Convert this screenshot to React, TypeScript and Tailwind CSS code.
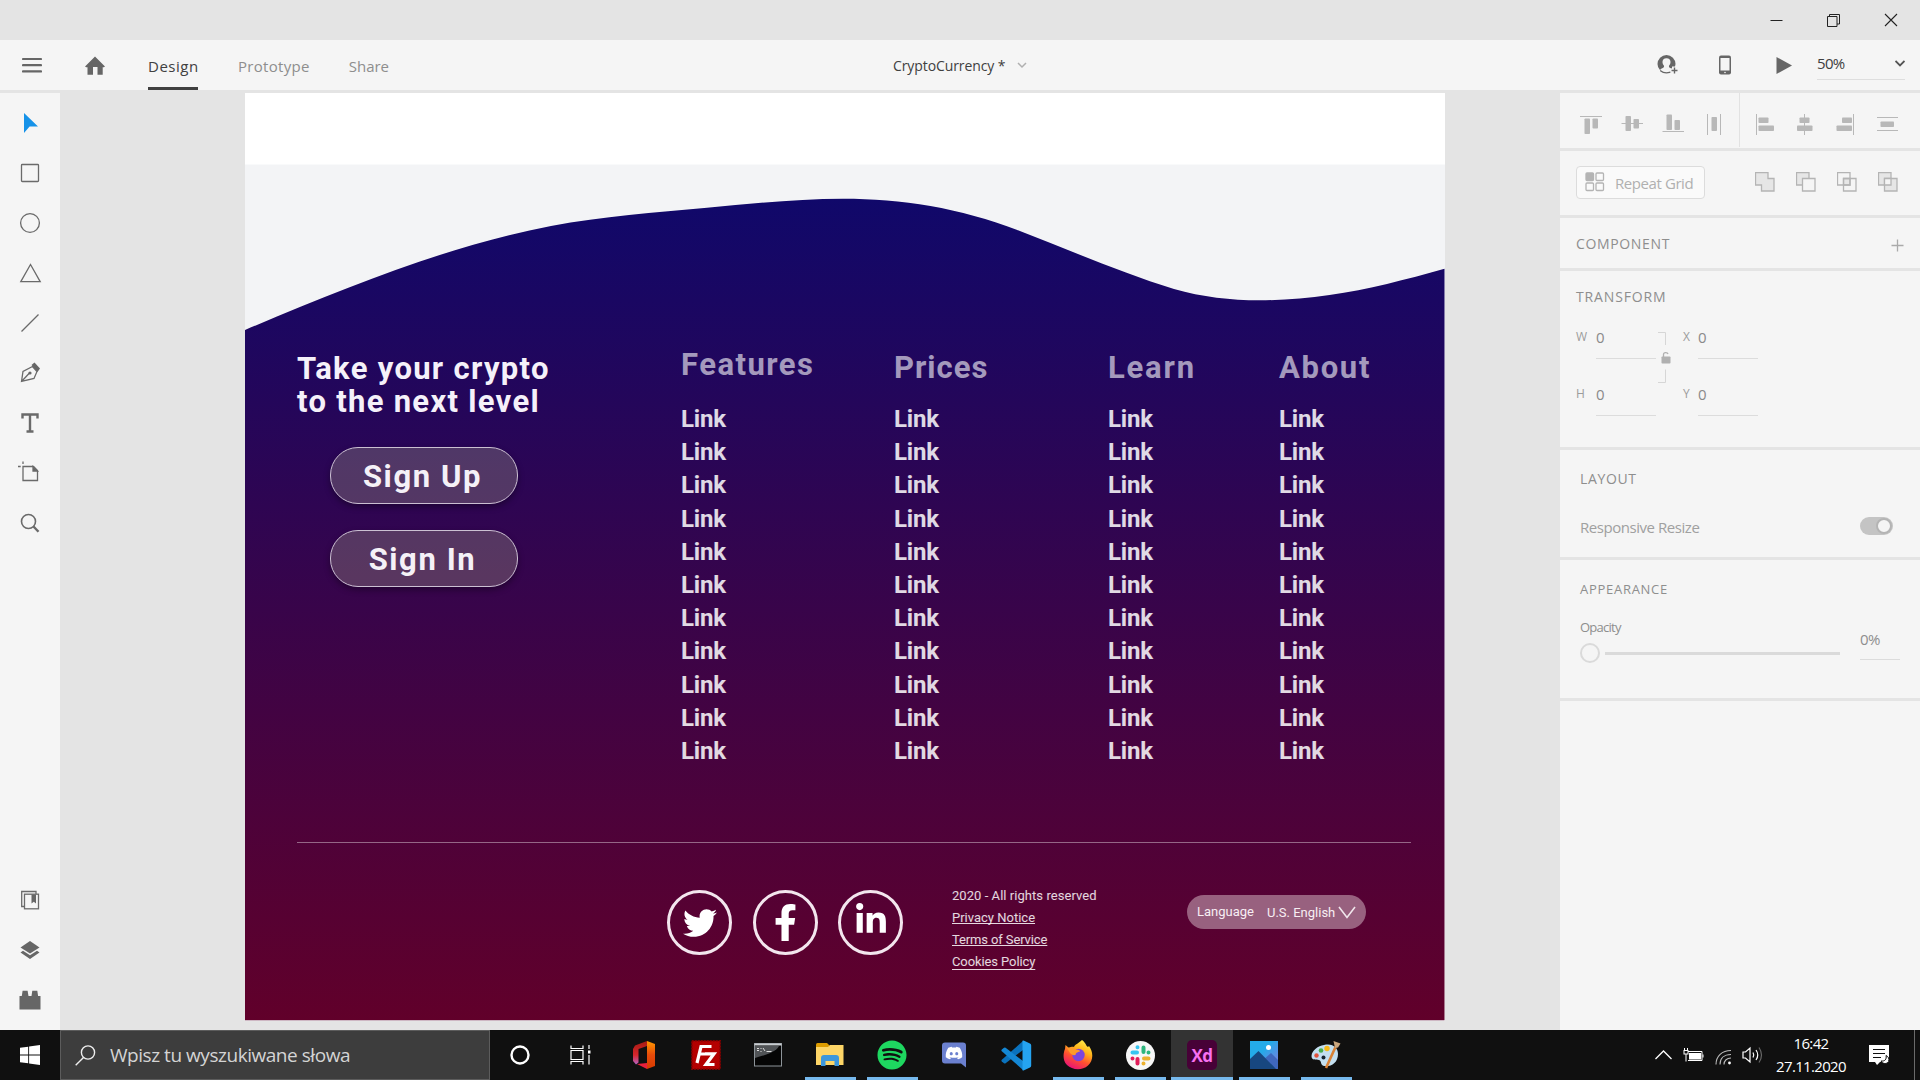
import React from "react";
import { FaDiscord, FaFacebookF, FaLinkedinIn, FaSpotify, FaTwitter } from "react-icons/fa";

type Kids = { children: React.ReactNode };

/* ---------- title bar and header ---------- */

function TitleBar() {
  return (
    <div className="flex h-10 shrink-0 items-center justify-end gap-[44px] bg-[#e4e4e4] pr-[22px]">
      <svg width="13" height="13" stroke="#222" fill="none"><path d="M.5 6.5h12" /></svg>
      <svg width="13" height="13" stroke="#222" fill="none" className="shrink-0">
        <path d="M.5 2.5h9.500v10h-9.500zM2.500 2V.5h10v9.500h-2.500" />
      </svg>
      <svg width="14" height="14" stroke="#222" fill="none"><path d="M1 1l12 12M13 1L1 13" strokeWidth="1.100" /></svg>
    </div>
  );
}

function Header() {
  return (
    <header className="flex h-[50px] shrink-0 items-center bg-[#f5f5f5] text-[15px]">
      <svg width="20" height="16" className="ml-[22px]" stroke="#666" strokeWidth="2.200" strokeLinecap="round">
        <path d="M1 2h18M1 8.200h18M1 14.400h18" />
      </svg>
      <svg width="20" height="19" className="ml-[43px]" fill="#666">
        <path d="M10 .5L20 10.500 18.800 11.300H17.700V18.700H12.500V11H8V18.700H2.500V11.300H1.200L0 10.500z" />
      </svg>
      <nav className="ml-[43px] flex h-full text-[#8e8e8e]">
        <span className="flex h-full w-[50px] items-center border-b-[3px] border-[#404040] pt-[5px] tracking-[0.500px] text-[#404040]">Design</span>
        <span className="ml-10 flex h-full items-center pt-0.5 tracking-[0.300px]">Prototype</span>
        <span className="ml-[39px] flex h-full items-center pt-0.5">Share</span>
      </nav>
      <div className="ml-[504px] flex items-center gap-3 text-[14px] tracking-[-0.100px] text-[#404040]">
        CryptoCurrency *
        <svg width="10" height="7" fill="none" stroke="#b0b0b0" strokeWidth="1.500"><path d="M1 1l4 4 4-4" /></svg>
      </div>
      <div className="ml-auto flex items-center">
        <svg width="21" height="20" className="mr-[41px]">
          <circle cx="9.500" cy="9" r="9" fill="#666" />
          <path d="M9.500 3.200c2.600 0 4 1.600 4 3.900 0 1.700-.8 2.800-1.500 3.700-.3 1.500.5 2 3.800 3.700L13 18H6l-2.800-3.500c3.300-1.700 4.100-2.200 3.800-3.700-.7-.9-1.500-2-1.500-3.700 0-2.300 1.400-3.900 4-3.900z" fill="#f5f5f5" />
          <path d="M3.400 15.700c3.500 3 8.600 3 12 0" fill="none" stroke="#666" strokeWidth="1.200" />
          <path d="M17 11.500v7.500M13.200 15.500h7.800" stroke="#f5f5f5" strokeWidth="4" />
          <path d="M17.500 12.500v6M14.500 15.500h6" stroke="#666" strokeWidth="1.400" />
        </svg>
        <svg width="12" height="20" className="mr-[45px]">
          <rect x="0" y=".5" width="12" height="19" rx="2" fill="#666" />
          <rect x="1.500" y="3" width="9" height="12.500" fill="#f5f5f5" />
          <circle cx="6" cy="17.500" r=".8" fill="#f5f5f5" />
        </svg>
        <svg width="16" height="17" className="mr-[25px]" fill="#666"><path d="M.5 0L16 8.500.5 17z" /></svg>
        <div className="mr-[15px] mb-px flex h-[30px] w-[88px] items-center justify-between border-b border-[#dedede] pb-0.5 tracking-[-0.700px] text-[#404040]">
          50%
          <svg width="10" height="7" fill="none" stroke="#555" strokeWidth="1.800"><path d="M.5 1l4.500 4.500L9.500 1" /></svg>
        </div>
      </div>
    </header>
  );
}

/* ---------- tool bar ---------- */

function Tool({ children }: Kids) {
  return (
    <div className="flex h-[50px] items-center justify-center">
      <svg width="24" height="24" fill="none" stroke="#6a6a6a" strokeWidth="1.300">{children}</svg>
    </div>
  );
}

function ToolBar() {
  return (
    <aside className="flex w-[60px] shrink-0 flex-col bg-[#f5f5f5] py-[5px]">
      <Tool><path d="M6 2v20l5.600-6.500H20z" fill="#1692e8" stroke="none" /></Tool>
      <Tool><rect x="3.500" y="3.500" width="17" height="17" rx=".8" /></Tool>
      <Tool><circle cx="12" cy="12" r="9.400" /></Tool>
      <Tool><path d="M12.500 3.500l9.700 17.200H2.800z" /></Tool>
      <Tool><path d="M3.500 20.500l17-17" /></Tool>
      <Tool>
        <g transform="translate(0 -1)">
          <path d="M3.500 21.500L5 11.500l9.500-5 4.500 5-3 7-12.500 3zM3.500 21.500l8-8.500" />
          <circle cx="12" cy="13" r="1.600" fill="#666" stroke="none" />
          <path d="M13.500 5l3-2.500 5.500 6-2.500 3.500z" fill="#666" stroke="none" />
        </g>
      </Tool>
      <Tool><path d="M4.500 7.500v-4h15v4M12 3.500v17M8.500 20.500h7" strokeWidth="2.400" /></Tool>
      <Tool>
        <g transform="translate(0 -1)">
          <path d="M5 6.500h10.500L19.500 10.500V20.500H5zM5 4V1.500M2.700 6.500H0" />
          <path d="M15 6.500v4.500h4.500z" fill="#666" />
        </g>
      </Tool>
      <Tool>
        <circle cx="10.500" cy="10.500" r="7" strokeWidth="1.600" />
        <path d="M15.500 15.500l5 5.300" strokeWidth="2.400" />
      </Tool>
      <div className="mt-auto">
        <Tool>
          <path d="M6 18.500H3.700v-15H18V6" />
          <rect x="6.500" y="6.200" width="14" height="14.600" />
          <path d="M13.500 6.500h4.500v9l-2.200-1.800-2.300 1.800z" fill="#666" stroke="none" />
        </Tool>
        <Tool>
          <path d="M12 3l9.500 6.500L12 15.500 2.500 9.500z" fill="#666" stroke="none" />
          <path d="M2.500 14.500l2.500-1.800 7 4.500 7-4.500 2.500 1.800-9.500 6.500z" fill="#666" stroke="none" />
        </Tool>
        <Tool><path d="M1.500 8h2.300l.8-5.200h5L10.500 8h3l.8-5.200h5l.8 5.200h2.400v13.500h-21z" fill="#666" stroke="none" /></Tool>
      </div>
    </aside>
  );
}

/* ---------- artboard ---------- */

const columns = [
  { title: "Features", box: "w-[213px]", head: "tracking-[1.470px]" },
  { title: "Prices", box: "w-[214px]", head: "pt-[3px] tracking-[1px]" },
  { title: "Learn", box: "w-[171px]", head: "pt-[3px] tracking-[1.800px]" },
  { title: "About", box: "w-[120px]", head: "pt-[3px] tracking-[1.700px]" },
];

function SignButton({ children }: Kids) {
  return (
    <button className="ml-[33px] flex h-[57px] w-[188px] items-center justify-center rounded-[28px] border border-[#cbc0d2] bg-[rgba(173,172,142,0.3)] pt-0.5 pr-[3px] text-[31px] leading-[36px] font-bold tracking-[1.600px] text-[#f5f1f7] shadow-[0_3px_6px_rgba(0,0,0,0.350)]">
      {children}
    </button>
  );
}

function Social({ children }: Kids) {
  return (
    <span className="flex size-[65px] items-center justify-center rounded-full border-[3px] border-[#f3e6ee] text-white">
      {children}
    </span>
  );
}

function Artboard() {
  return (
    <main className="relative ml-[185px] h-[928px] w-[1200px] shrink-0 bg-[#f3f4f6] font-['Roboto',sans-serif]">
      <svg className="absolute inset-0" width="1200" height="928">
        <defs>
          <linearGradient id="sea" x1="0" y1="0" x2="0" y2="1">
            <stop offset="0" stopColor="#10086a" />
            <stop offset="1" stopColor="#61002a" />
          </linearGradient>
        </defs>
        <rect width="1200" height="71.500" fill="#fff" />
        <path
          fill="url(#sea)"
          d="M0 237C102 194 204 152.400 306 133C358 123 410 119.500 462 114.700C507 110.500 553 105.700 598 105.700C656 105.700 715 114.700 773 137.300C825 157.300 877 180 929 196C957 204 986 207.300 1014.500 207.300C1038 207.300 1061 205.200 1084.500 202C1123 196.500 1161 186.500 1199.500 175.700V927.300H0z"
        />
      </svg>
      <div className="relative flex flex-col pt-[256px]">
        <div className="flex pl-[52px]">
          <div className="mt-[3px] w-[384px] shrink-0">
            <h1 className="mb-[29px] text-[31px] leading-[33px] font-bold tracking-[1.300px] text-[#f5f1fa]">
              Take your crypto<br />to the next level
            </h1>
            <div className="flex flex-col gap-[26px]">
              <SignButton>Sign Up</SignButton>
              <SignButton>Sign In</SignButton>
            </div>
          </div>
          {columns.map((c) => (
            <section key={c.title} className={c.box}>
              <div className="h-[54px]">
                <h2 className={`${c.head} text-[31px] leading-[32px] font-bold text-white/60`}>{c.title}</h2>
              </div>
              <ul className="text-[24px] leading-[33.200px] font-bold tracking-[-0.150px] text-white/85">
                {Array.from({ length: 11 }, (_, i) => <li key={i}>Link</li>)}
              </ul>
            </section>
          ))}
        </div>
        <hr className="mt-[74px] ml-[52px] w-[1114px] border-0 border-t-[1.500px] border-white/40" />
        <footer className="mt-[47px] flex items-start pl-[422px] text-[13px] text-white/85">
          <div className="flex gap-[20.500px]">
            <Social><FaTwitter size={34} /></Social>
            <Social><FaFacebookF size={37} /></Social>
            <Social><FaLinkedinIn size={34} className="mb-[5px]" /></Social>
          </div>
          <div className="-mt-[5px] ml-[49px] flex w-[235px] flex-col leading-[22px] [text-decoration-skip-ink:none]">
            <span className="tracking-[0.050px]">2020 - All rights reserved</span>
            <span className="underline underline-offset-1">Privacy Notice</span>
            <span className="tracking-[-0.120px] underline underline-offset-1">Terms of Service</span>
            <span className="tracking-[-0.100px] underline underline-offset-3">Cookies Policy</span>
          </div>
          <div className="mt-[5px] flex h-[34px] w-[179px] items-center rounded-full bg-[#98617f] pl-[10px] text-[#f7eef3]">
            <span className="mb-px">Language</span>
            <span className="mt-px ml-[13px]">U.S. English</span>
            <svg width="18" height="13" className="ml-[3px]" fill="none" stroke="#f0e6ec" strokeWidth="1.600"><path d="M1 1l8 10.500L17 1" /></svg>
          </div>
        </footer>
      </div>
    </main>
  );
}

/* ---------- property inspector ---------- */

function Align({ lines, a, b }: { lines: string; a: number[]; b?: number[] }) {
  return (
    <svg width="22" height="22" fill="#b8b8b8" className="shrink-0">
      <path d={lines} stroke="#b8b8b8" />
      <rect x={a[0]} y={a[1]} width={a[2]} height={a[3]} rx=".8" />
      {b && <rect x={b[0]} y={b[1]} width={b[2]} height={b[3]} rx=".8" />}
    </svg>
  );
}

const A = "M.5.5h12.500v12.500h-12.500z";
const B = "M6.500 6.500h12.500v12.500h-12.500z";

function Bool({ children }: Kids) {
  return <svg width="20" height="20" stroke="#b4b4b4" strokeWidth="1.300" fill="none">{children}</svg>;
}

function Field({ label, gap }: { label: string; gap: string }) {
  return (
    <div className="flex h-[37px] items-start">
      <span className={`${gap} pt-[5px] text-[12px] leading-[20px] text-[#9c9c9c]`}>{label}</span>
      <span className="h-full w-[60px] border-b border-[#dcdcdc] pt-1 text-[15px] leading-[22px] text-[#8a8a8a]">0</span>
    </div>
  );
}

function Inspector() {
  const section = "shrink-0 bg-[#f5f5f5]";
  return (
    <aside className="ml-auto flex w-[360px] shrink-0 flex-col gap-[3px] text-[15px] text-[#8e8e8e]">
      <div className={`${section} flex h-[55px]`}>
        <div className="flex h-[54px] w-[180px] items-center gap-[19px] border-r border-[#e2e2e2] pt-[7px] pl-5">
          <Align lines="M0 3.500h22" a={[4.5, 5.500, 5.500, 15.500]} b={[12.500, 5.500, 5.500, 10]} />
          <Align lines="M.5 10.500h21.500" a={[4.500, 3, 5.500, 15]} b={[12.500, 6, 5.500, 9.500]} />
          <Align lines="M.5 18.500h21.500" a={[4.500, 1.500, 5.500, 15.500]} b={[12.500, 7, 5.500, 10]} />
          <Align lines="M4.500 1v21M17.500 1v21" a={[8.500, 4, 5.500, 14]} />
        </div>
        <div className="flex h-[54px] items-center gap-[19px] pt-[7px] pl-[14px]">
          <Align lines="M2.500 1v21" a={[4.500, 4.500, 10, 5.500]} b={[4.500, 12.500, 15.500, 5.500]} />
          <Align lines="M9.500 1v21" a={[4.500, 4.500, 10, 5.500]} b={[2, 12.500, 15.500, 5.500]} />
          <Align lines="M17.500 1v21" a={[6, 4.500, 10, 5.500]} b={[.5, 12.500, 15.500, 5.500]} />
          <Align lines="M0 4.500h21M0 17.500h21" a={[3.500, 8.500, 13.500, 5.500]} />
        </div>
      </div>
      <div className={`${section} flex h-16 items-start pt-[15px] pl-4`}>
        <button className="flex h-[33px] w-[129px] items-center gap-[10px] rounded border border-[#dcdcdc] bg-[#fafafa] pl-2 tracking-[-0.420px] whitespace-nowrap text-[#b0b0b0]">
          <svg width="20" height="20" className="mb-px" fill="none" stroke="#b4b4b4" strokeWidth="1.300">
            <rect x="1" y="1" width="7.500" height="7.500" rx="1" fill="#b4b4b4" />
            <rect x="11" y="1" width="7.500" height="7.500" rx="1" />
            <rect x="1" y="11" width="7.500" height="7.500" rx="1" />
            <rect x="11" y="11" width="7.500" height="7.500" rx="1" />
          </svg>
          <span className="mt-px">Repeat Grid</span>
        </button>
        <div className="mt-[6px] ml-[49.500px] flex gap-[21px]">
          <Bool><path d="M.5.5h12.500v6h6v12.500h-12.500v-6h-6z" fill="#e6e6e6" /></Bool>
          <Bool><path d={A} fill="#e6e6e6" /><path d={B} fill="#f5f5f5" /></Bool>
          <Bool><path d="M6.500 6.500h6.500v6.500h-6.500z" fill="#e6e6e6" /><path d={A} /><path d={B} /></Bool>
          <Bool><path d={A} fill="#e6e6e6" /><path d={B} fill="#e6e6e6" /><path d="M6.500 6.500h6.500v6.500h-6.500z" fill="#f5f5f5" /></Bool>
        </div>
      </div>
      <div className={`${section} flex h-[50px] items-center justify-between pr-4 pl-4 text-[14px] tracking-[0.650px]`}>
        <span>COMPONENT</span>
        <svg width="13" height="13" className="mt-1" stroke="#aaa" strokeWidth="1.300"><path d="M.5 6.500h12M6.500.5v12" /></svg>
      </div>
      <div className={`${section} h-[176px] pl-4`}>
        <h3 className="pt-[16px] text-[14px] leading-[20px] tracking-[0.850px]">TRANSFORM</h3>
        <div className="mt-[14px] flex">
          <div className="flex w-20 flex-col gap-5 pt-px">
            <Field label="W" gap="w-5" />
            <Field label="H" gap="w-5" />
          </div>
          <svg width="16" height="54" className="mt-[10px] ml-px" fill="none" stroke="#d6d6d6">
            <path d="M1 1.500h7.500V14M8.500 38.500V51.500H1" />
            <rect x="4.500" y="25.500" width="9" height="7" rx=".8" fill="#b0b0b0" stroke="none" />
            <path d="M6.500 26v-2.500c0-2.500 4-2.500 4.500-.5" stroke="#b0b0b0" strokeWidth="1.300" />
          </svg>
          <div className="ml-[10px] flex flex-col gap-5 pt-px">
            <Field label="X" gap="w-[15px]" />
            <Field label="Y" gap="w-[15px]" />
          </div>
        </div>
      </div>
      <div className={`${section} h-[107px] pl-5`}>
        <h3 className="pt-[19px] text-[14px] leading-[20px] tracking-[0.650px]">LAYOUT</h3>
        <div className="mt-[26px] flex items-center justify-between pr-[27px]">
          <span className="mt-px mb-[3px] leading-[22px] tracking-[-0.450px] text-[#a0a0a0]">Responsive Resize</span>
          <span className="mb-1 flex h-[18px] w-[33px] items-center justify-end rounded-full bg-[#c4c4c4] pr-px">
            <span className="size-4 rounded-full border-2 border-[#b4b4b4] bg-[#f5f5f5]" />
          </span>
        </div>
      </div>
      <div className={`${section} flex h-[138px] pl-5`}>
        <div className="w-[280px]">
          <h3 className="pt-[20px] text-[13px] leading-[18px] tracking-[0.720px]">APPEARANCE</h3>
          <div className="mt-[20px] text-[13px] leading-[18px] tracking-[-0.740px]">Opacity</div>
          <div className="mt-[7px] flex items-center gap-[5px]">
            <span className="size-5 rounded-full border-[2.500px] border-[#dadada]" />
            <span className="h-[3px] w-[235px] bg-[#dadada]" />
          </div>
        </div>
        <div className="mt-[68px] h-[32px] w-[40px] border-b border-[#dcdcdc] leading-[22px] tracking-[-0.600px]">0%</div>
      </div>
      <div className="grow bg-[#f5f5f5]" />
    </aside>
  );
}

/* ---------- task bar ---------- */

function TaskApp({ children, running, active }: Kids & { running?: boolean; active?: boolean }) {
  return (
    <div className={`flex h-full w-[62px] shrink-0 flex-col items-center ${active ? "bg-[#333]" : ""}`}>
      <span className="flex h-[47px] items-center pt-[3px]">{children}</span>
      {running && <span className={`h-[3px] bg-[#76b9ed] ${active ? "w-full" : "w-[51px]"}`} />}
    </div>
  );
}

function TaskBar() {
  return (
    <div className="flex h-[50px] shrink-0 bg-[#101010] text-white">
      <div className="flex w-[60px] items-center pl-5">
        <svg width="20" height="20" fill="#fff"><path d="M0 2.800L8.200 1.700V9.500H0zM9.100 1.600L20 0V9.500H9.100zM0 10.400H8.200V18.300L0 17.200zM9.100 10.400H20V20L9.100 18.400z" /></svg>
      </div>
      <div className="flex w-[430px] items-center border border-[#5c5c5c] bg-[#3d3d3d] pl-[14px] text-[19px] tracking-[-0.460px] text-[#d4d4d4]">
        <svg width="21" height="21" className="mr-[14px]" fill="none" stroke="#eee" strokeWidth="1.400"><circle cx="13" cy="7.500" r="6.600" /><path d="M8.500 12.500L.7 20.300" /></svg>
        Wpisz tu wyszukiwane słowa
      </div>
      <div className="flex w-[60px] items-center justify-center">
        <svg width="20" height="20" fill="none" stroke="#fff" strokeWidth="2.400"><circle cx="10" cy="10" r="8.500" /></svg>
      </div>
      <div className="mr-[3px] flex w-[60px] items-center justify-center">
        <svg width="21" height="20" fill="none" stroke="#fff" strokeWidth="1.200">
          <path d="M1 .5V3.500H13V.5M1 5.500H13V14.500H1zM1 19.500V16.500H13V19.500M19 0V4M19 10V19.500" />
          <rect x="18" y="5.500" width="2.500" height="3" fill="#fff" stroke="none" />
        </svg>
      </div>

      <TaskApp>
        <svg width="24" height="30">
          <defs>
            <linearGradient id="office" x1="0" y1="0" x2="0" y2="1"><stop offset="0" stopColor="#a31a12" /><stop offset=".6" stopColor="#d8262c" /><stop offset="1" stopColor="#b565c8" /></linearGradient>
            <linearGradient id="office2" x1="0" y1="0" x2="0" y2="1"><stop offset="0" stopColor="#ff9800" /><stop offset=".5" stopColor="#e64a0a" /><stop offset="1" stopColor="#d83b01" /></linearGradient>
          </defs>
          <path d="M15 1L3 5.500 1 9v12l3 3.500 2.500-2V9l8.500-3z" fill="url(#office)" />
          <path d="M15 1l8 3v22l-8 3V24z" fill="url(#office2)" />
          <path d="M5 24l10-1v6z" fill="#e8203c" />
        </svg>
      </TaskApp>
      <TaskApp>
        <svg width="30" height="30">
          <rect x=".8" y=".8" width="28.400" height="28.400" fill="#b40000" stroke="#7d0000" strokeWidth="1.600" strokeDasharray="2 1" />
          <path d="M6 23L10 6.500H20.500M8 14h8M14 13.800H23L15 24.500h8.500" fill="none" stroke="#fff" strokeWidth="3.200" />
        </svg>
      </TaskApp>
      <TaskApp>
        <svg width="28" height="24">
          <rect x=".5" y=".5" width="27" height="22.500" fill="#050505" stroke="#8d9499" />
          <path d="M1 3h24C22 9 12 12 1 15z" fill="#505356" />
          <path d="M.5 1.500h27" stroke="#c8cdd0" strokeWidth="2" />
          <path d="M3 5.500h2M3 7.500h2M7 5v1M7 8v1M9 5l2 3M12.500 8.500h5" stroke="#ddd" />
        </svg>
      </TaskApp>
      <TaskApp running>
        <svg width="28" height="26">
          <path d="M0 2.500Q0 1 1.500 1H11l2.500 2.500V6H0z" fill="#dd9c00" />
          <path d="M0 5h12l2-2h13.500v20H0z" fill="#fdd567" />
          <path d="M5 24v-8q0-3 3-3h12q3 0 3 3v8h-4.500v-5h-9v5z" fill="#3c97dd" />
        </svg>
      </TaskApp>
      <TaskApp running><FaSpotify size={30} color="#1ed760" /></TaskApp>
      <TaskApp>
        <svg width="24" height="26">
          <path d="M3 .5h18q3 0 3 3V25.500l-5-4H3q-3 0-3-3v-15q0-3 3-3z" fill="#6b80cf" />
          <g transform="translate(3 2)"><FaDiscord size={18} color="#fff" /></g>
        </svg>
      </TaskApp>
      <TaskApp>
        <svg width="31" height="31" viewBox="0 0 31 31">
          <path d="M22 1L.8 19.800q-.8.8 0 1.600L3 23.200q.8.5 1.600 0L22 10z" fill="#0a72bd" />
          <path d="M22 30L.8 11.200q-.8-.8 0-1.600L3 7.800q.8-.5 1.600 0L22 21z" fill="#1487d4" />
          <path d="M21.500.8q.8-.5 1.600 0L29 3.500q1.200.5 1.200 2V25.500q0 1.500-1.200 2L23.100 30.200q-.8.500-1.600 0z" fill="#25a4f1" />
        </svg>
      </TaskApp>
      <TaskApp running>
        <svg width="30" height="30">
          <defs><linearGradient id="fox" x1=".8" y1="0" x2=".3" y2="1"><stop offset="0" stopColor="#fff44f" /><stop offset=".35" stopColor="#ffb31a" /><stop offset=".65" stopColor="#ff5030" /><stop offset="1" stopColor="#e8107a" /></linearGradient></defs>
          <path d="M19 0c4 3 4 6 6 7l1-1c5 7 4 15-1 19.500C19 31 9 30 4 25-1 20 .5 12 2 9l.5-4L6 8c2-1.500 4-1.500 5-1 1-3 4-3 8-7z" fill="url(#fox)" />
          <circle cx="15.500" cy="15" r="6.200" fill="#7b45dd" />
          <path d="M4 8c5-2 8 0 9 1.500 3 0 4 1 4 2-3 1-4 1-4.500 3.500-2.500.5-4-.5-5.500-2z" fill="#ff9a28" />
        </svg>
      </TaskApp>
      <TaskApp running>
        <svg width="29" height="29">
          <circle cx="14.500" cy="14.500" r="14.500" fill="#f7f7f7" />
          <g fill="none" strokeWidth="4" strokeLinecap="round">
            <path d="M6.500 11.500h4.500M11.500 6.200v0" stroke="#36c5f0" />
            <path d="M17.500 6.500V11M22.500 11.500v0" stroke="#2eb67d" />
            <path d="M18 17.500h4.500M17.500 22.500v0" stroke="#ecb22e" />
            <path d="M11.500 18v4.500M6.500 17.500v0" stroke="#e01e5a" />
          </g>
        </svg>
      </TaskApp>
      <TaskApp running active>
        <span className="flex size-[30px] items-center justify-center rounded-[5px] bg-[#470137] text-[17px] leading-none font-bold tracking-[-0.500px] text-[#f870f0]">Xd</span>
      </TaskApp>
      <TaskApp running>
        <svg width="28" height="28">
          <defs><linearGradient id="sky" x1="0" y1="0" x2="1" y2="1"><stop offset=".4" stopColor="#24abe9" /><stop offset="1" stopColor="#8a73dd" /></linearGradient></defs>
          <rect width="28" height="28" fill="url(#sky)" />
          <path d="M12 20L21 12l7 7v9H12z" fill="#3f67bd" />
          <path d="M0 18l8.500-8L26 28H0z" fill="#174780" />
          <circle cx="18.500" cy="6.500" r="2.500" fill="#fff" />
        </svg>
      </TaskApp>
      <TaskApp running>
        <svg width="30" height="30">
          <path d="M13 5c9-2 14 3 14 9 0 9-7 13-14 12-4-1-2-5-5-6S.5 21 .5 16C1 10 7 6 13 5z" fill="#c3dff0" />
          <circle cx="12.500" cy="17.500" r="2" fill="#16242e" />
          <circle cx="5.500" cy="15.500" r="2.200" fill="#e0533d" />
          <circle cx="10" cy="10.500" r="2.300" fill="#48ae4c" />
          <circle cx="16" cy="8.500" r="2.700" fill="#f7b917" />
          <path d="M15 28L24.500 7" stroke="#d98236" strokeWidth="2.600" />
          <path d="M22.500 1l7 2.500-2.500 4-3 .5z" fill="#c9a57c" />
        </svg>
      </TaskApp>

      <div className="ml-auto flex items-center">
        <svg width="17" height="10" fill="none" stroke="#fff" strokeWidth="1.300"><path d="M.5 9l8-8 8 8" /></svg>
        <svg width="21" height="14" className="ml-[11px]" fill="none" stroke="#fff">
          <path d="M5 3.500h14v9H5" /><rect x="6" y="5" width="12" height="6.500" fill="#fff" stroke="none" />
          <path d="M20 6.500v3M1.500 0v2M4.500 0v2M3 6v7.500" /><rect x="1" y="2.500" width="4" height="3.500" />
        </svg>
        <svg width="17" height="16" className="mt-1 ml-[11px]" fill="none" stroke="#bbb" strokeWidth="1.100">
          <path d="M1 15.500C1 7 7 1.500 16 1.500M5 15.500C5 9.500 9 5.500 16 5.500M9 15.500c0-4 3-6.500 7-6.500" /><circle cx="14.500" cy="14" r="1.400" fill="#fff" stroke="none" />
        </svg>
        <svg width="21" height="18" className="ml-[10px]" fill="none" stroke="#fff" strokeWidth="1.200">
          <path d="M1 6h2.500L8 2V16L3.500 12H1zM11 6.500q1.500 2.500 0 5M14 4q3.500 5 0 10" /><path d="M17 1.500q5 7.500 0 15" stroke="#666" />
        </svg>
        <div className="ml-[12px] flex w-[72px] flex-col items-center text-[15px] leading-[23px] tracking-[-0.660px]">
          <span>16:42</span><span>27.11.2020</span>
        </div>
        <svg width="21" height="20" className="ml-[22px]">
          <path d="M0 0h20v17H11l-3 3-2-3H0z" fill="#fff" /><path d="M4 4.500h12M4 8.500h12M4 12.500h8" stroke="#101010" />
          <path d="M17 10.500c1 4-1.500 6-5 5.500 1.500 3 6 3.500 7.500.5 1-2.500 0-5-2.500-6z" fill="#fff" stroke="#101010" />
        </svg>
        <div className="ml-[24px] h-[50px] w-1.5 border-l border-[#6a6a6a]" />
      </div>
    </div>
  );
}

export default function App() {
  return (
    <div className="flex h-[1080px] w-[1920px] flex-col overflow-hidden bg-[#e4e4e4] font-['Open_Sans','Noto_Sans',sans-serif]">
      <TitleBar />
      <Header />
      <div className="flex min-h-0 grow pt-[3px]">
        <ToolBar />
        <Artboard />
        <Inspector />
      </div>
      <TaskBar />
    </div>
  );
}
